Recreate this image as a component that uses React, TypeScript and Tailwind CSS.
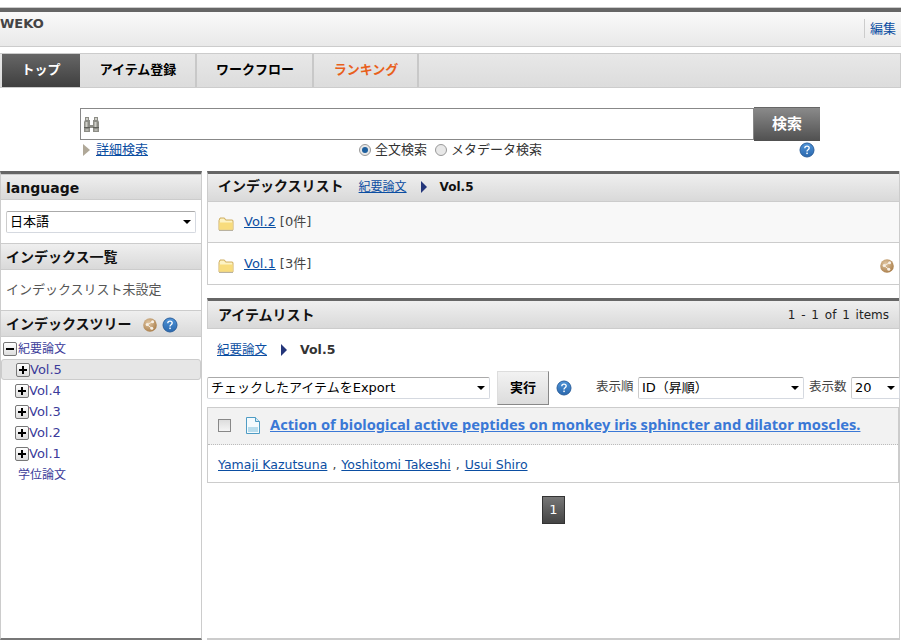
const font = "font-['DejaVu_Sans','Noto_Sans_CJK_JP',sans-serif]";
const barBg = "bg-[linear-gradient(#efefef,#d9d9d9)]";

const Help = ({ className = "" }: { className?: string }) => (
  <svg width="16" height="16" viewBox="0 0 16 16" className={`shrink-0 ${className}`}>
    <defs>
      <linearGradient id="hlp" x1="0" y1="0" x2="0" y2="1">
        <stop offset="0" stopColor="#4f94d8" />
        <stop offset="1" stopColor="#2a68ae" />
      </linearGradient>
    </defs>
    <circle cx="8" cy="8" r="7" fill="url(#hlp)" stroke="#2b5f9c" strokeWidth="1" />
    <path d="M5.8 6.2c0-1.3 1-2 2.2-2s2.2.7 2.2 1.9c0 1.7-2.2 1.6-2.2 3.3" fill="none" stroke="#fff" strokeWidth="1.3" />
    <rect x="7.3" y="10.6" width="1.5" height="1.5" fill="#fff" />
  </svg>
);

const Ball = ({ className = "" }: { className?: string }) => (
  <svg width="14" height="14" viewBox="0 0 14 14" className={`shrink-0 ${className}`}>
    <defs>
      <radialGradient id="bll" cx="0.4" cy="0.35" r="0.7">
        <stop offset="0" stopColor="#e2c8a4" />
        <stop offset="1" stopColor="#a87c48" />
      </radialGradient>
    </defs>
    <circle cx="7" cy="7" r="6.8" fill="url(#bll)" />
    <path d="M9.5 3.8 4.2 6.6l4.4 3.6" fill="none" stroke="#f4ebde" strokeWidth="1" />
    <circle cx="9.6" cy="3.8" r="1.5" fill="#f7f0e6" />
    <circle cx="4.2" cy="6.6" r="1.5" fill="#f7f0e6" />
    <circle cx="8.8" cy="10.2" r="1.5" fill="#f7f0e6" />
  </svg>
);

const Folder = () => (
  <svg width="16" height="14" viewBox="0 0 16 14" className="shrink-0 mt-[4px]">
    <path d="M1 3.5 2 1h4.5l1 2h7l.5 1v8.5l-.5.5h-13l-.5-.5z" fill="#fdf3c4" stroke="#c39a3e" strokeWidth=".8" />
    <path d="M1.4 5.5h13.2v7H1.4z" fill="#f8dc7c" />
    <path d="M1 13h14v1H1z" fill="#b9b2a0" />
  </svg>
);

const Binoculars = () => (
  <svg width="17" height="17" viewBox="0 0 17 17" className="shrink-0">
    <path d="M2 1h4v3h1v5h3V4h1V1h4v3l1 2v10h-6v-4H7v4H1V6l1-2z" fill="#8d8d86" />
    <path d="M3 2h2v2H3zM12 2h2v2h-2zM2.5 6h2v5h-2zM11.5 6h2v5h-2z" fill="#cfcfc8" />
    <path d="M1 11h6v1H1zM10 11h6v1h-6z" fill="#5f5f5a" />
    <path d="M2.5 13h3v2h-3zM11.5 13h3v2h-3z" fill="#b5b5ae" />
  </svg>
);

const Doc = () => (
  <svg width="14" height="17" viewBox="0 0 14 17" className="shrink-0">
    <path d="M.5.5h9l4 4v12H.5z" fill="#f4fafd" stroke="#4f9cc4" />
    <path d="M9.5.5v4h4" fill="#d3e9f4" stroke="#4f9cc4" />
    <path d="M2 10h10v5H2z" fill="#b7dcec" />
  </svg>
);

const Box = ({ sign }: { sign: "+" | "-" }) => (
  <span className="w-[14px] h-[14px] shrink-0 rounded-[2px] border border-[#777] bg-[linear-gradient(#fff,#ddd)] relative block">
    <span className="absolute left-[2px] top-[5px] w-[8px] h-[2px] bg-black" />
    {sign === "+" && <span className="absolute left-[5px] top-[2px] w-[2px] h-[8px] bg-black" />}
  </span>
);

const Radio = ({ on }: { on?: boolean }) => (
  <span className="w-[12px] h-[12px] shrink-0 rounded-full border border-[#999] bg-[#e8e8e8] flex items-center justify-center">
    {on && <span className="w-[6px] h-[6px] rounded-full bg-[#1d5f9e]" />}
  </span>
);

const Select = ({ label, className = "" }: { label: string; className?: string }) => (
  <div className={`h-[22px] shrink-0 flex items-center justify-between border border-[#d5d9e0] border-t-[#aaa] border-l-[#ccc] rounded-[2px] bg-white pl-[3px] pr-[4px] text-[13px] text-black ${className}`}>
    <span className="whitespace-nowrap">{label}</span>
    <span className="w-0 h-0 border-x-[4px] border-x-transparent border-t-[4px] border-t-black" />
  </div>
);

const SideHead = ({ children, h = "h-[27px]" }: { children: React.ReactNode; h?: string }) => (
  <div className={`${h} ${barBg} border-y border-[#ccc] pl-[5px] pt-[2px] flex items-center text-[14px] font-bold text-[#111]`}>
    {children}
  </div>
);

const Arrow = () => (
  <span className="block w-0 h-0 border-y-[6px] border-y-transparent border-l-[6px] border-l-[#24367a]" />
);

const tabs = [
  { name: "トップ", w: "w-[78px]", cls: "bg-[linear-gradient(#666,#3f3f3f)] text-white" },
  { name: "アイテム登録", w: "w-[116px]", cls: "text-black border-r-2 border-[#c8c8c8]" },
  { name: "ワークフロー", w: "w-[116px]", cls: "text-black border-r-2 border-[#c8c8c8]" },
  { name: "ランキング", w: "w-[104px]", cls: "text-[#e8601c] border-r-2 border-[#c8c8c8]" },
];

const tree = ["Vol.5", "Vol.4", "Vol.3", "Vol.2", "Vol.1"];
const link = "text-[#0b4ea2] underline";

export default function App() {
  return (
    <div className={`w-[907px] h-[642px] bg-white overflow-hidden pt-[7px] ${font}`}>
      <div className="w-[901px]">
        {/* header */}
        <div className="h-[40px] border-t border-[#ccc] border-b border-b-[#ccc] bg-[linear-gradient(#666_0,#666_4px,#fafafa_4px,#e9e9e9_100%)] flex justify-between">
          <div className="pt-[6px] text-[13px] font-bold text-[#444] leading-[20px]">WEKO</div>
          <div className="self-end mb-[8px] mr-[5px] border-l border-[#ccc] pl-[5px] text-[13px] leading-[19px] text-[#0b4ea2]">編集</div>
        </div>

        {/* tabs */}
        <div className="mt-[6px] h-[35px] border-y border-[#ccc] border-r bg-[linear-gradient(#e8e8e8,#dcdcdc)] flex pl-[2px] text-[13px] font-bold">
          {tabs.map((t) => (
            <div key={t.name} className={`${t.w} mr-[1px] pb-[2px] shrink-0 flex items-center justify-center ${t.cls}`}>
              {t.name}
            </div>
          ))}
        </div>

        {/* search */}
        <div className="h-[83px] pt-[19px] pl-[80px]">
          <div className="flex items-center w-[740px]">
            <div className="w-[674px] h-[32px] border border-[#888] flex items-center pl-[2px]">
              <Binoculars />
            </div>
            <div className="w-[66px] h-[34px] bg-[linear-gradient(#8a8a8a,#505050)] border-t border-[#666] flex items-center justify-center text-white font-bold text-[15px]">
              検索
            </div>
          </div>
          <div className="h-[18px] w-[735px] flex items-center text-[13px] text-[#333] leading-[18px]">
            <span className="ml-[3px] w-0 h-0 border-y-[6px] border-y-transparent border-l-[7px] border-l-[#b0a898]" />
            <span className={`ml-[6px] ${link}`}>詳細検索</span>
            <span className="ml-[211px]"><Radio on /></span>
            <span className="ml-[4px]">全文検索</span>
            <span className="ml-[8px]"><Radio /></span>
            <span className="ml-[4px]">メタデータ検索</span>
            <Help className="ml-auto" />
          </div>
        </div>

        <div className="flex items-stretch h-[469px]">
          {/* sidebar */}
          <div className="w-[202px] shrink-0 border-t-[3px] border-[#666] border-r border-r-[#ccc] border-l border-l-[#ccc] border-b-2 border-b-[#777]">
            <SideHead h="h-[26px]">language</SideHead>
            <div className="h-[43px] pt-[11px] px-[5px]">
              <Select label="日本語" className="w-[190px]" />
            </div>
            <SideHead>インデックス一覧</SideHead>
            <div className="h-[40px] px-[5px] flex items-center text-[13px] text-[#555]">インデックスリスト未設定</div>
            <SideHead>
              インデックスツリー
              <Ball className="ml-[11px]" />
              <Help className="ml-[5px]" />
            </SideHead>
            <div className="pt-[1px] text-[12px] text-[#3b3b9a]">
              <div className="h-[21px] pl-[2px] flex items-center"><Box sign="-" /><span className="ml-[1px]">紀要論文</span></div>
              {tree.map((v, i) => (
                <div
                  key={v}
                  className={`h-[21px] pl-[14px] flex items-center text-[13px] ${i === 0 ? "bg-[#e6e6e6] border border-[#ccc] rounded-[3px] pl-[13px] box-border" : ""}`}
                >
                  <Box sign="+" />
                  <span>{v}</span>
                </div>
              ))}
              <div className="h-[21px] pl-[17px] flex items-center">学位論文</div>
            </div>
          </div>

          {/* main */}
          <div className="ml-[5px] w-[693px] border-r border-[#ccc] border-b-2 border-b-[#ccc]">
            <div className="border-t-[3px] border-[#666] border-l border-l-[#ccc] border-b border-b-[#ccc]">
              <div className={`h-[28px] ${barBg} border-b border-[#ccc] pl-[10px] pb-[2px] flex items-center`}>
                <span className="text-[14px] font-bold text-[#111]">インデックスリスト</span>
                <span className={`ml-[15px] text-[12px] ${link}`}>紀要論文</span>
                <span className="ml-[14px]"><Arrow /></span>
                <span className="ml-[13px] text-[12px] font-bold text-[#111]">Vol.5</span>
              </div>
              <div className="h-[41px] bg-[#f8f8f8] border-b border-[#ccc] pl-[10px] flex items-center text-[13px] text-[#444]">
                <Folder />
                <span className={`ml-[10px] ${link}`}>Vol.2</span>
                <span className="ml-[4px]">[0件]</span>
              </div>
              <div className="h-[41px] pl-[10px] pr-[5px] flex items-center text-[13px] text-[#444]">
                <Folder />
                <span className={`ml-[10px] ${link}`}>Vol.1</span>
                <span className="ml-[4px]">[3件]</span>
                <Ball className="ml-auto mt-[4px]" />
              </div>
            </div>

            <div className="mt-[13px] border-t-[3px] border-[#666] border-l border-l-[#ccc]">
              <div className={`h-[28px] ${barBg} border-b border-[#ccc] pl-[10px] pr-[10px] pt-[1px] flex items-center`}>
                <span className="text-[14px] font-bold text-[#111]">アイテムリスト</span>
                <span className="ml-auto text-[12px] text-[#222] whitespace-pre [word-spacing:2px]">1 - 1 of 1 items</span>
              </div>
            </div>

            <div className="h-[41px] pl-[10px] pt-[1px] flex items-center">
              <span className={`text-[12.5px] ${link}`}>紀要論文</span>
              <span className="ml-[14px]"><Arrow /></span>
              <span className="ml-[13px] text-[12.5px] font-bold text-[#333]">Vol.5</span>
            </div>

            <div className="h-[35px] flex items-center text-[12.5px] text-[#444]">
              <Select label="チェックしたアイテムをExport" className="w-[283px]" />
              <div className="ml-[7px] w-[52px] h-[34px] shrink-0 bg-[linear-gradient(#f2f2f2,#dcdcdc)] border border-[#ddd] border-r-[#888] border-b-[#888] flex items-center justify-center text-[13px] text-black font-bold">実行</div>
              <Help className="ml-[7px]" />
              <span className="ml-[24px] w-[38px] shrink-0 whitespace-nowrap">表示順</span>
              <Select label="ID（昇順）" className="ml-[4px] w-[166px]" />
              <span className="ml-[5px] w-[38px] shrink-0 whitespace-nowrap">表示数</span>
              <Select label="20" className="ml-[4px] w-[49px]" />
            </div>

            <div className="mt-[2px] h-[76px] border border-[#ccc]">
              <div className="h-[37px] bg-[#f2f2f2] border-b border-dotted border-[#bbb] pl-[10px] pb-[2px] flex items-center">
                <span className="w-[13px] h-[13px] border border-[#888] bg-[linear-gradient(#ddd,#f5f5f5)] shrink-0" />
                <span className="ml-[15px]"><Doc /></span>
                <span className="ml-[10px] font-['Noto_Sans','Noto_Sans_CJK_JP',sans-serif] text-[14.65px] font-bold text-[#3a78d6] underline whitespace-nowrap">
                  Action of biological active peptides on monkey iris sphincter and dilator moscles.
                </span>
              </div>
              <div className="h-[38px] pl-[10px] pt-[3px] flex items-center text-[12.5px] text-[#444]">
                <span className={link}>Yamaji Kazutsuna</span>
                <span className="mx-[5px]">,</span>
                <span className={link}>Yoshitomi Takeshi</span>
                <span className="mx-[5px]">,</span>
                <span className={link}>Usui Shiro</span>
              </div>
            </div>

            <div className="mt-[13px] flex justify-center pl-[1px]">
              <div className="w-[23px] h-[28px] bg-[linear-gradient(#777,#444)] border border-[#333] flex items-center justify-center text-white text-[13px]">1</div>
            </div>
          </div>
        </div>
      </div>
    </div>
  );
}
